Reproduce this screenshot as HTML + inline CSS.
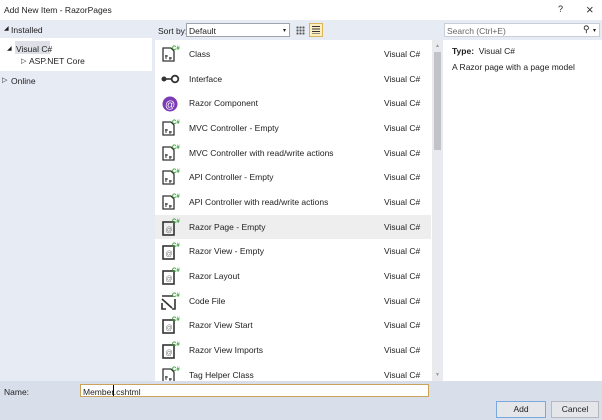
<!DOCTYPE html>
<html><head><style>
*{margin:0;padding:0;box-sizing:border-box}
body{width:602px;height:420px;background:#e7ebf4;font-family:"Liberation Sans",sans-serif;font-size:8.5px;color:#1e1e1e;position:relative;overflow:hidden}
.a{position:absolute}
.row{position:absolute;left:155px;width:276px;height:24px}
.row .ic{position:absolute;left:6px;top:3px}
.row .t{position:absolute;left:34px;top:7px}
.row .v{position:absolute;left:229px;top:7px}
.sel{background:#eeeeef}
</style></head><body>
<div class="a" style="left:0;top:0;width:602px;height:20px;background:#fff"></div>
<div class="a" style="left:4px;top:5px;font-size:8.5px">Add New Item - RazorPages</div>
<div class="a" style="left:558px;top:4px;font-size:9px">?</div>
<div class="a" style="left:586px;top:2px;font-size:13px;font-weight:300;color:#333">×</div>

<div class="a" style="left:4px;top:25px;font-size:6px">◢</div>
<div class="a" style="left:11px;top:25px">Installed</div>
<div class="a" style="left:0;top:38px;width:152px;height:33px;background:#fff"></div>
<div class="a" style="left:7px;top:45px;font-size:6px">◢</div>
<div class="a" style="left:15px;top:41px;width:35px;height:13px;background:#dde0e6"></div>
<div class="a" style="left:16px;top:44px">Visual C#</div>
<div class="a" style="left:21px;top:57px;font-size:7px">▷</div>
<div class="a" style="left:29px;top:56px">ASP.NET Core</div>
<div class="a" style="left:2px;top:76px;font-size:7px">▷</div>
<div class="a" style="left:11px;top:76px">Online</div>

<div class="a" style="left:158px;top:26px">Sort by:</div>
<div class="a" style="left:186px;top:23px;width:104px;height:14px;background:#fff;border:1px solid #9ea3ad"></div>
<div class="a" style="left:189px;top:26px">Default</div>
<div class="a" style="left:283px;top:27px;font-size:6px">▾</div>
<div class="a" style="left:296px;top:26px;width:9px;height:9px;background:radial-gradient(circle,#555 1px,transparent 1.2px) 0 0/3px 3px"></div>
<div class="a" style="left:309px;top:23px;width:14px;height:14px;background:#fbeec1;border:1px solid #d8b45a"></div>
<div class="a" style="left:312px;top:26px;width:8px;height:8px;background:repeating-linear-gradient(#333 0 1px,transparent 1px 2.5px)"></div>

<div class="a" style="left:444px;top:23px;width:156px;height:14px;background:#fff;border:1px solid #c9ced8"></div>
<div class="a" style="left:447px;top:26px;color:#666">Search (Ctrl+E)</div>
<div class="a" style="left:583px;top:24px;font-size:9px">⚲</div>
<div class="a" style="left:593px;top:27px;font-size:6px">▾</div>

<div class="a" style="left:155px;top:40px;width:278px;height:341px;background:#fff"></div>
<div class="a" style="left:432px;top:40px;width:10px;height:341px;background:#eaeaee"></div>
<div class="a" style="left:434px;top:52px;width:7px;height:98px;background:#c2c3c9"></div>
<div class="a" style="left:435px;top:43px;font-size:5px;color:#999">▲</div>
<div class="a" style="left:435px;top:372px;font-size:5px;color:#999">▼</div>
<div class="a" style="left:443px;top:40px;width:159px;height:341px;background:#fff"></div>
<div class="a" style="left:452px;top:46px"><b>Type:</b>&nbsp; Visual C#</div>
<div class="a" style="left:452px;top:62px">A Razor page with a page model</div>

<svg width="0" height="0" style="position:absolute"><defs>
<g id="cls"><path d="M2 3h8l3 3v10H2z" fill="none" stroke="#333" stroke-width="1.3"/><path d="M4 11h3M5 10v4M8 13h3M9 12v3" stroke="#333" stroke-width="1"/><text x="11" y="5" font-size="6" fill="#2a9a2a" font-weight="bold" font-family="Liberation Sans">C#</text></g>
<g id="rz"><rect x="2" y="4" width="11" height="13" fill="none" stroke="#333" stroke-width="1.6"/><text x="4.5" y="14" font-size="7" fill="#777" font-family="Liberation Sans">@</text><text x="11" y="5" font-size="6" fill="#2a9a2a" font-weight="bold" font-family="Liberation Sans">C#</text></g>
</defs></svg>

<div class="row" style="top:42px"><svg class="ic" width="20" height="18"><use href="#cls"/></svg><span class="t">Class</span><span class="v">Visual C#</span></div>
<div class="row" style="top:67px"><svg class="ic" width="20" height="18"><circle cx="3" cy="9" r="2.5" fill="#333"/><path d="M5 9h6" stroke="#333" stroke-width="1.6"/><circle cx="14" cy="9" r="3.3" fill="none" stroke="#333" stroke-width="1.8"/></svg><span class="t">Interface</span><span class="v">Visual C#</span></div>
<div class="row" style="top:91px"><svg class="ic" width="20" height="18"><circle cx="9" cy="10" r="7.5" fill="#7a3bb5"/><text x="4" y="14" font-size="10" fill="#fff" font-family="Liberation Sans">@</text></svg><span class="t">Razor Component</span><span class="v">Visual C#</span></div>
<div class="row" style="top:116px"><svg class="ic" width="20" height="18"><use href="#cls"/></svg><span class="t">MVC Controller - Empty</span><span class="v">Visual C#</span></div>
<div class="row" style="top:141px"><svg class="ic" width="20" height="18"><use href="#cls"/></svg><span class="t">MVC Controller with read/write actions</span><span class="v">Visual C#</span></div>
<div class="row" style="top:165px"><svg class="ic" width="20" height="18"><use href="#cls"/></svg><span class="t">API Controller - Empty</span><span class="v">Visual C#</span></div>
<div class="row" style="top:190px"><svg class="ic" width="20" height="18"><use href="#cls"/></svg><span class="t">API Controller with read/write actions</span><span class="v">Visual C#</span></div>
<div class="row sel" style="top:215px"><svg class="ic" width="20" height="18"><use href="#rz"/></svg><span class="t">Razor Page - Empty</span><span class="v">Visual C#</span></div>
<div class="row" style="top:239px"><svg class="ic" width="20" height="18"><use href="#rz"/></svg><span class="t">Razor View - Empty</span><span class="v">Visual C#</span></div>
<div class="row" style="top:264px"><svg class="ic" width="20" height="18"><use href="#rz"/></svg><span class="t">Razor Layout</span><span class="v">Visual C#</span></div>
<div class="row" style="top:289px"><svg class="ic" width="20" height="18"><path d="M1 4h11M1 7l10 9M1 11v6h4M14 7v10h-3" fill="none" stroke="#333" stroke-width="1.6"/><text x="11" y="5" font-size="6" fill="#2a9a2a" font-weight="bold" font-family="Liberation Sans">C#</text></svg><span class="t">Code File</span><span class="v">Visual C#</span></div>
<div class="row" style="top:313px"><svg class="ic" width="20" height="18"><use href="#rz"/></svg><span class="t">Razor View Start</span><span class="v">Visual C#</span></div>
<div class="row" style="top:338px"><svg class="ic" width="20" height="18"><use href="#rz"/></svg><span class="t">Razor View Imports</span><span class="v">Visual C#</span></div>
<div class="row" style="top:363px"><svg class="ic" width="20" height="18"><use href="#cls"/></svg><span class="t">Tag Helper Class</span><span class="v">Visual C#</span></div>

<div class="a" style="left:0;top:381px;width:602px;height:39px;background:#d9dfea"></div>
<div class="a" style="left:4px;top:387px">Name:</div>
<div class="a" style="left:80px;top:384px;width:349px;height:13px;background:#fff;border:1px solid #c9a35a"></div>
<div class="a" style="left:83px;top:387px">Member.cshtml</div>
<div class="a" style="left:113px;top:385px;width:1px;height:11px;background:#000"></div>
<div class="a" style="left:496px;top:401px;width:50px;height:17px;background:#e4e6ea;border:1px solid #7aa7dc;text-align:center;line-height:15px">Add</div>
<div class="a" style="left:551px;top:401px;width:48px;height:17px;background:#e4e6ea;border:1px solid #b5b8bf;text-align:center;line-height:15px">Cancel</div>
</body></html>
